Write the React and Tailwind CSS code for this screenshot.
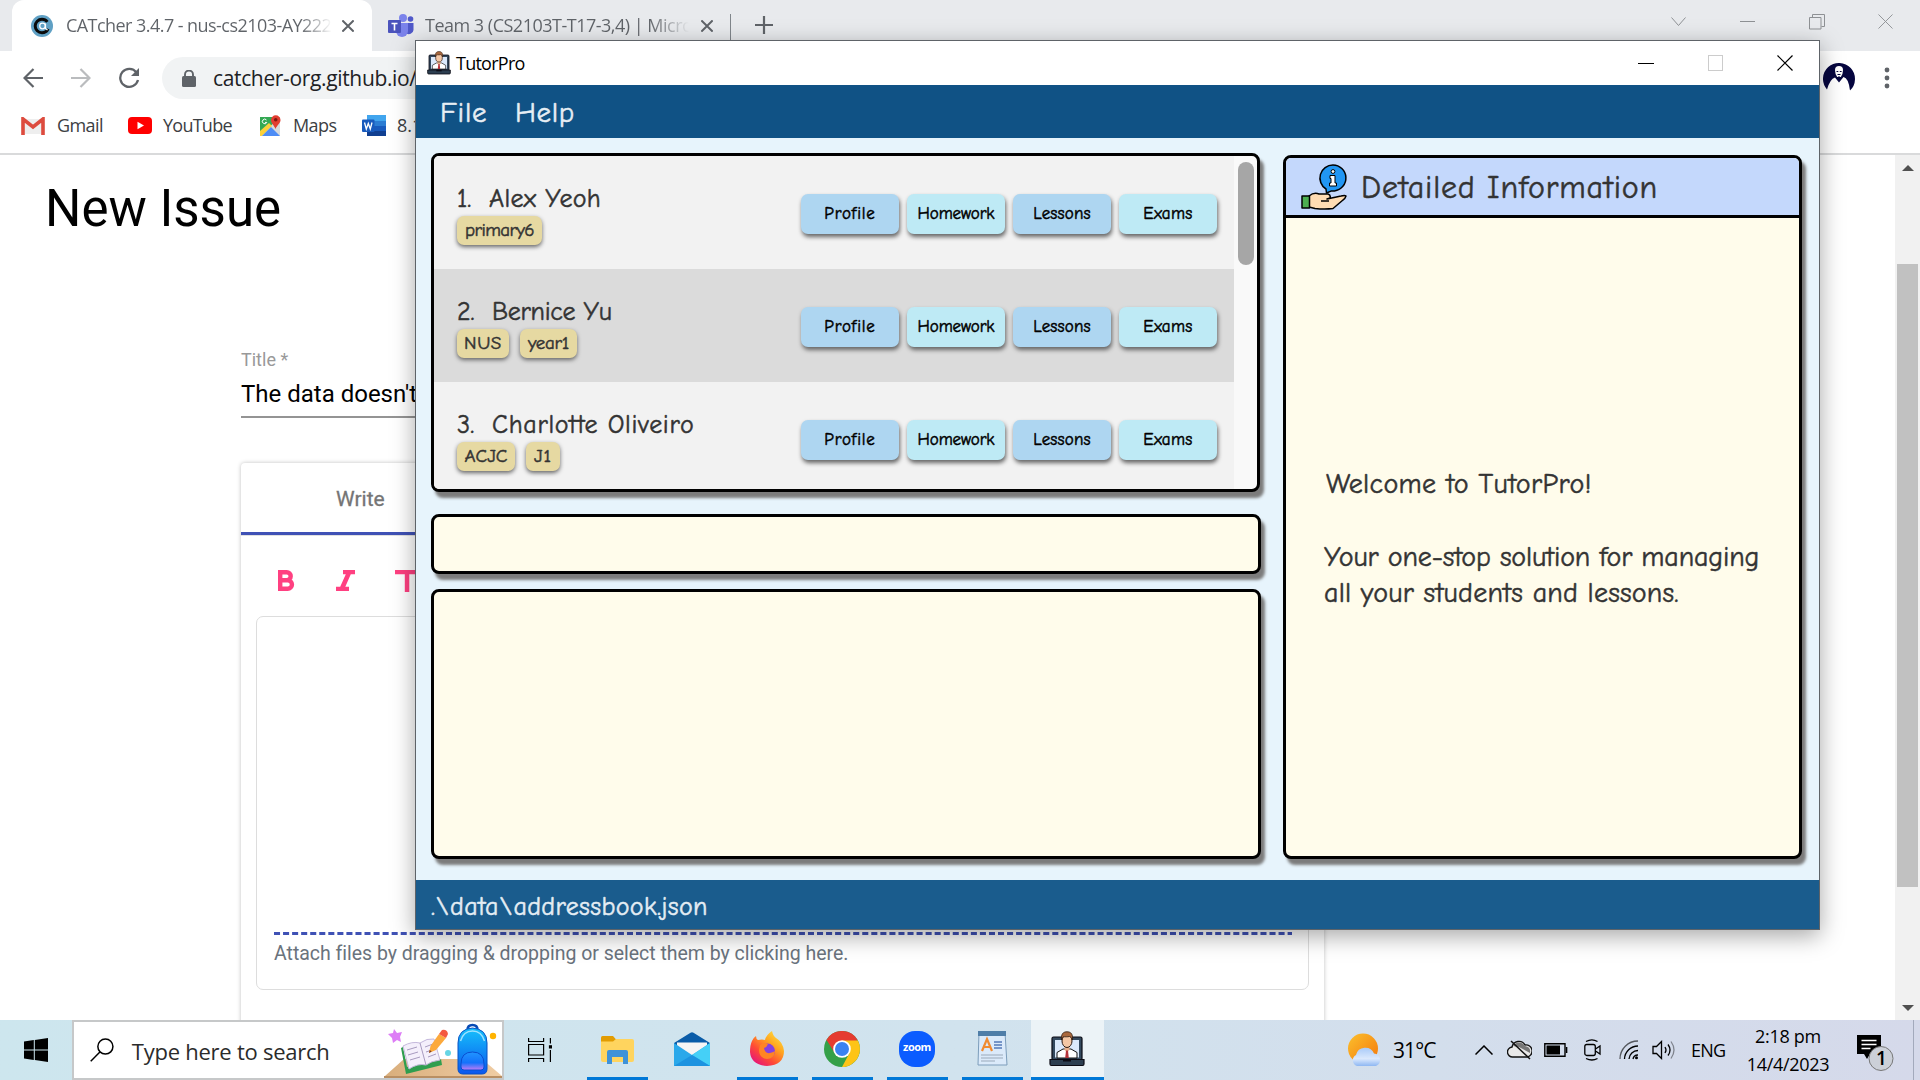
import React from "react";

const TutorIcon = ({ className }) => (
  <svg viewBox="0 0 36 36" className={className}>
    <rect x="3" y="6" width="30" height="23" rx="1.5" fill="#34495e" stroke="#0b0b14" strokeWidth="1.2" />
    <rect x="6" y="9" width="24" height="17.5" fill="#dbe9fb" />
    <path d="M8 27v-5.500l6-3.500h8l6 3.500V27z" fill="#fff" stroke="#111" strokeWidth="1" />
    <path d="M15.500 14h5v5l-2.500 2-2.500-2z" fill="#e8b08c" />
    <ellipse cx="18" cy="10" rx="5" ry="6.500" fill="#f4c7a5" stroke="#2a1a12" strokeWidth="1" />
    <path d="M12.500 9C12 3 14 .8 18 .8S24 3 23.500 9c-1-2-1.500-3-3-3.500-2 .5-5 .3-6 .2-1 .8-1.600 2-2 3.300z" fill="#a9683d" stroke="#2a1a12" strokeWidth=".8" />
    <path d="M17 19.500h2l.8 7.500h-3.600z" fill="#b5333b" />
    <path d="M1 28.500h34v4.500q0 1.500-1.500 1.500h-31Q1 34.500 1 33z" fill="#2c3e50" stroke="#0b0b14" strokeWidth="1.200" />
    <rect x="14" y="28.500" width="8" height="2" fill="#0b0b14" />
  </svg>
);

const X = ({ className, sw = 1 }) => (
  <svg viewBox="0 0 16 16" className={className} fill="none" stroke="currentColor" strokeWidth={sw}>
    <path d="M.5.5l15 15M15.500.5l-15 15" />
  </svg>
);

function TabStrip() {
  return (
    <div className="flex h-[51px] bg-[#e8eaed] pl-3 text-[18px] text-[#5f6368]">
      <div className="flex w-[360px] items-center rounded-t-[12px] bg-white pl-[19px]">
        <svg viewBox="0 0 22 22" className="h-[22px] w-[22px] shrink-0">
          <circle cx="11" cy="11" r="11" fill="#5fa0c4" />
          <circle cx="11" cy="11" r="6.800" fill="none" stroke="#0a0a0a" strokeWidth="3" strokeDasharray="35 8" strokeDashoffset="-3" />
          <circle cx="11.500" cy="11" r="2.800" fill="none" stroke="#fff" strokeWidth="1.300" />
          <path d="M14.500 8.500v5l2 1.500" fill="none" stroke="#fff" strokeWidth="1.200" />
        </svg>
        <div className="ml-[13px] w-[266px] overflow-hidden whitespace-nowrap bg-gradient-to-r from-[#5f6368] from-88% to-transparent bg-clip-text tracking-[-0.55px] text-transparent">CATcher 3.4.7 - nus-cs2103-AY222</div>
        <X className="ml-[10px] h-[12px] w-[12px] shrink-0" sw={2.6} />
      </div>
      <div className="flex w-[358px] items-center border-r-0 pl-[16px]">
        <svg viewBox="0 0 26 24" className="h-[24px] w-[26px] shrink-0">
          <circle cx="15" cy="4" r="4" fill="#7b83eb" />
          <circle cx="22.500" cy="5" r="2.800" fill="#5059c9" />
          <path d="M18 9h7.500v7a4.500 4.500 0 0 1-7.500 3z" fill="#5059c9" />
          <path d="M8 9h12v8a6 6 0 0 1-12 0z" fill="#7b83eb" />
          <rect y="6" width="13" height="13" rx="1" fill="#4b53bc" />
          <path d="M3.500 9.500h6M6.500 9.500v7" stroke="#fff" strokeWidth="1.600" />
        </svg>
        <div className="ml-[11px] w-[264px] overflow-hidden whitespace-nowrap bg-gradient-to-r from-[#5f6368] from-85% to-transparent bg-clip-text tracking-[-0.5px] text-transparent">Team 3 (CS2103T-T17-3,4) | Micro</div>
        <X className="ml-[12px] h-[12px] w-[12px] shrink-0" sw={2.6} />
      </div>
      <div className="mt-[14px] h-[27px] w-px bg-[#80868b]" />
      <svg viewBox="0 0 18 18" className="ml-[24px] mt-[16px] h-[18px] w-[18px]" stroke="#5f6368" strokeWidth="2.200"><path d="M9 0v18M0 9h18" /></svg>
      <div className="ml-auto flex items-start gap-[53px] pr-[27px] pt-[14px] text-[#8e9194]">
        <svg viewBox="0 0 16 16" className="h-4 w-4" fill="none" stroke="currentColor"><path d="M.5 3.500l7 8 7-8" /></svg>
        <svg viewBox="0 0 16 16" className="h-4 w-4" fill="none" stroke="currentColor"><path d="M0 7.500h15" /></svg>
        <svg viewBox="0 0 16 16" className="h-4 w-4" fill="none" stroke="currentColor"><path d="M.5 3.500h11.500v11.500H.5zM3.500 3.500v-3h12v12h-3" /></svg>
        <X className="h-[15px] w-[15px]" />
      </div>
    </div>
  );
}

function Toolbar() {
  return (
    <div className="flex h-[54px] items-center bg-white">
      <svg viewBox="0 0 20 20" className="ml-[23px] h-[20px] w-[20px]" fill="none" stroke="#5f6368" strokeWidth="2.200"><path d="M20 10H2M10.500 1L1.500 10l9 9" /></svg>
      <svg viewBox="0 0 20 20" className="ml-[28px] h-[20px] w-[20px]" fill="none" stroke="#babcbe" strokeWidth="2.200"><path d="M0 10h18M9.500 1l9 9-9 9" /></svg>
      <svg viewBox="0 0 22 22" className="ml-[27px] h-[22px] w-[22px]" fill="none" stroke="#5f6368" strokeWidth="2.300"><path d="M18.500 5.500A9 9 0 1 0 20 13" /><path d="M21 1v8h-8z" fill="#5f6368" stroke="none" /></svg>
      <div className="ml-[22px] flex h-[42px] w-[600px] items-center rounded-full bg-[#f1f3f4] pl-[20px]">
        <svg viewBox="0 0 14 17" className="h-[17px] w-[14px]"><rect y="6" width="14" height="11" rx="1.500" fill="#5f6368" /><path d="M3 7V4.500a4 4 0 0 1 8 0V7" fill="none" stroke="#5f6368" strokeWidth="1.900" /></svg>
        <span className="ml-[17px] pt-[2px] text-[21px] tracking-[-0.35px] text-[#202124]">catcher-org.github.io/</span>
      </div>
      <svg viewBox="0 0 32 32" className="ml-auto h-[32px] w-[32px]">
        <path d="M4 27.500A16 16 0 1 1 27 28.500Q25.500 16 20.500 15L16 20.500 12 15.500Q7 17 4 27.500z" fill="#06063f" />
        <path d="M12 8q0-4 4-4t4 4q0 4.500-2.200 7h-3.600Q12 12.500 12 8z" fill="#fff" />
        <path d="M13.500 9.500h1.800M16.800 9.500h1.800M14.500 12.500h3M16 14v5" stroke="#06063f" />
      </svg>
      <svg viewBox="0 0 6 22" className="ml-[29px] mr-[30px] h-[22px] w-[6px]" fill="#5f6368"><circle cx="3" cy="3" r="2.400" /><circle cx="3" cy="11" r="2.400" /><circle cx="3" cy="19" r="2.400" /></svg>
    </div>
  );
}

function Bookmarks() {
  return (
    <div className="flex h-[50px] items-center border-b-2 border-[#d9dadb] bg-white pb-[8px] pt-px text-[18px] text-[#3c4043]">
      <svg viewBox="0 0 24 18" className="ml-[21px] h-[18px] w-[24px]"><path d="M2 2h20v15H2z" fill="#eee" /><path d="M2 18V2l10 8 10-8v16" fill="none" stroke="#dd4b3e" strokeWidth="3.600" /></svg>
      <span className="ml-[12px] w-[71px] tracking-[-0.6px]">Gmail</span>
      <svg viewBox="0 0 24 17" className="h-[17px] w-[24px]"><rect width="24" height="17" rx="4" fill="#f00" /><path d="M9.500 4.800v7.400l6.500-3.700z" fill="#fff" /></svg>
      <span className="ml-[11px] w-[96px] tracking-[-0.75px]">YouTube</span>
      <svg viewBox="0 0 22 22" className="h-[22px] w-[22px]">
        <path d="M1 2h20v19H1z" fill="#34a853" /><path d="M1 21L21 2v19z" fill="#d7dadd" /><path d="M1 16L10 8l3 3L3 21H1z" fill="#fbd13a" /><path d="M3 21l9-9 9 9z" fill="#4d8cf5" />
        <path d="M16.500 14C15 10 12 8.500 12 5a4.500 4.500 0 0 1 9.500 0c0 3.500-3.500 5-5 9z" fill="#e23d30" /><circle cx="16.700" cy="4.800" r="1.800" fill="#7b1710" />
        <path d="M7.500 5a2.300 2.300 0 1 0 .3 2.400H6" stroke="#fff" fill="none" />
      </svg>
      <span className="ml-[12px] w-[69px] tracking-[-0.6px]">Maps</span>
      <svg viewBox="0 0 24 21" className="h-[21px] w-[24px]"><path d="M5 0h19v21H5z" fill="#185abd" /><path d="M5 0h19v6H5z" fill="#41a5ee" /><path d="M5 6h19v5H5z" fill="#2b7cd3" /><path d="M5 16h19v5H5z" fill="#103f91" /><rect y="4.500" width="12.500" height="12.500" rx="1" fill="#185abd" /><path d="M2.500 7.500l1.800 6.500 2-5.500 2 5.500 1.700-6.500" fill="none" stroke="#fff" strokeWidth="1.300" /></svg>
      <span className="ml-[11px]">8.1</span>
    </div>
  );
}

function IssuePage() {
  return (
    <div className="flex h-[865px] bg-white font-['Roboto',sans-serif]">
      <div className="flex-1 overflow-hidden">
        <h1 className="ml-[45px] mt-[24px] h-[60px] text-[51px] leading-[60px] text-black">New Issue</h1>
        <div className="ml-[241px] mt-[110px] w-[1083px]">
          <div className="h-[22px] text-[18px] leading-[22px] text-[#999]">Title *</div>
          <div className="mt-[9px] h-[38px] border-b-2 border-[#949494] text-[24px] leading-[28px] text-black">The data doesn&apos;t</div>
          <div className="mt-[45px] h-[600px] rounded-[4px] bg-white shadow-[0_0_4px_rgba(0,0,0,0.25)]">
            <div className="h-[72px] border-b-3 border-[#3f51b5] pl-[95px] pt-[23px] text-[21px] leading-[26px] text-[#757575] [-webkit-text-stroke:0.3px]">Write</div>
            <div className="flex h-[81px] border-t border-[#e0e0e0] pl-[37px] pt-[34px] text-[#ff4081]">
              <svg viewBox="0 0 17 21" className="h-[21px] w-[17px]" fill="none" stroke="currentColor" strokeWidth="4.400"><path d="M2.200 2.200h6.500a4 4 0 0 1 0 8H2.200zM2.200 10.300h7.500a4.100 4.100 0 0 1 0 8.500H2.200z" /></svg>
              <svg viewBox="0 0 19 21" className="ml-[41px] h-[21px] w-[19px]" fill="currentColor"><path d="M7 0h12v4.200h-4.200L9.300 16.800H13V21H0v-4.200h4.200L9.800 4.200H7z" /></svg>
              <svg viewBox="0 0 24 22" className="ml-[40px] h-[22px] w-[24px]" fill="currentColor"><path d="M0 0h24v4.200h-9.700V22h-4.500V4.200H0z" /></svg>
            </div>
            <div className="mx-[15px] h-[374px] rounded-[7px] border border-[#ddd] px-[17px] pt-[315px]">
              <svg viewBox="0 0 1018 3" className="h-[3px] w-[1018px]"><path d="M0 1.500h1018" stroke="#3f51b5" strokeWidth="3" strokeDasharray="6.050 3" /></svg>
              <div className="mt-[7px] text-[19.5px] leading-[24px] tracking-[-0.02px] text-[#6a737d]">Attach files by dragging &amp; dropping or select them by clicking here.</div>
            </div>
          </div>
        </div>
      </div>
      <div className="flex w-[25px] flex-col items-center bg-[#f1f1f1]">
        <svg viewBox="0 0 12 6" className="mt-[10px] h-[6px] w-[12px]" fill="#505050"><path d="M6 0l6 6H0z" /></svg>
        <div className="mt-[93px] h-[623px] w-[21px] bg-[#c1c1c1]" />
        <svg viewBox="0 0 12 6" className="mt-[118px] h-[6px] w-[12px]" fill="#505050"><path d="M0 0h12L6 6z" /></svg>
      </div>
    </div>
  );
}

const students = [
  { n: "1.", gap: "w-[32px]", name: "Alex Yeoh", nameCls: "tracking-[0.3px]", tags: [["primary6", "w-[85px] tracking-[-0.6px]"]] },
  { n: "2.", gap: "w-[35px]", name: "Bernice Yu", nameCls: "tracking-[-0.3px]", tags: [["NUS", "w-[52px] tracking-[0.6px]"], ["year1", "w-[57px] tracking-[-0.3px]"]] },
  { n: "3.", gap: "w-[35px]", name: "Charlotte Oliveiro", nameCls: "tracking-[0.7px]", tags: [["ACJC", "w-[58px] tracking-[0px]"], ["J1", "w-[34px] tracking-[0.8px]"]] },
];

const actions = [
  ["Profile", "bg-[#aed6f1] tracking-[0.8px]"],
  ["Homework", "bg-[#beeaf5] tracking-[-0.1px]"],
  ["Lessons", "bg-[#aed6f1] tracking-[0.15px]"],
  ["Exams", "bg-[#beeaf5] tracking-[0.3px]"],
];

const panel = "border-3 border-black rounded-[8px] shadow-[4px_6px_3px_#7c7c7c]";
const comic = "font-['Comic_Sans_MS','Comic_Neue','Noto_Sans',sans-serif] [-webkit-text-stroke:0.5px]";

function TutorWindow() {
  return (
    <div className="absolute left-[415px] top-[40px] flex h-[890px] w-[1405px] flex-col border border-[#5e6368] bg-[#e7f4fc] shadow-[0_6px_22px_rgba(0,0,0,0.35)]">
      <div className="flex h-[44px] shrink-0 items-center bg-white pl-[11px] text-[18px] text-black">
        <TutorIcon className="h-[26px] w-[24px]" />
        <span className="ml-[5px] tracking-[-0.75px]">TutorPro</span>
        <div className="ml-auto flex items-center gap-[54px] pr-[26px]">
          <div className="h-px w-[16px] bg-black" />
          <div className="h-[16px] w-[15px] border border-[#ccc]" />
          <X className="h-[16px] w-[16px]" sw={1.2} />
        </div>
      </div>
      <div className={`flex h-[53px] shrink-0 items-center bg-[#105285] pl-[24px] pt-[2px] text-[29px] text-[#e7eef4] ${comic}`}>
        <span className="w-[75px] tracking-[0.8px]">File</span>
        <span className="tracking-[0.6px]">Help</span>
      </div>
      <div className={`flex h-[742px] shrink-0 pl-[15px] text-[#333] ${comic}`}>
        <div className="flex w-[830px] flex-col pt-[15px]">
          <div className={`${panel} flex h-[339px] w-[829px] overflow-hidden bg-[#f9f9f9]`}>
            <div className="w-[800px] shrink-0">
              {students.map((s, i) => (
                <div key={s.n} className={`flex h-[113px] pl-[23px] ${i === 1 ? "bg-[#dbdbdb]" : "bg-[#f2f2f2]"}`}>
                  <div className="w-[344px] pt-[27px]">
                    <div className="flex h-[33px] whitespace-pre text-[26px] leading-[32px]">
                      <span className={s.gap}>{s.n}</span>
                      <span className={s.nameCls}>{s.name}</span>
                    </div>
                    <div className="flex gap-[11px]">
                      {s.tags.map(([t, c]) => (
                        <span key={t} className={`${c} flex h-[29px] items-center justify-center rounded-[7px] bg-[#e6d9a2] text-[19px] shadow-[0_2px_4px_#666]`}>{t}</span>
                      ))}
                    </div>
                  </div>
                  <div className="flex gap-2 pt-[38px]">
                    {actions.map(([t, c]) => (
                      <div key={t} className={`${c} flex h-[40px] w-[98px] items-center justify-center rounded-[7px] pb-px text-[17px] text-black shadow-[1px_3px_4px_#666]`}>{t}</div>
                    ))}
                  </div>
                </div>
              ))}
            </div>
            <div className="ml-[4px] mt-[6px] h-[103px] w-[16px] rounded-full bg-[#a6a6a6]" />
          </div>
          <div className={`${panel} mt-[22px] h-[60px] bg-[#fffceb]`} />
          <div className={`${panel} mt-[15px] h-[270px] bg-[#fffceb]`} />
        </div>
        <div className={`${panel} ml-[22px] mt-[17px] h-[704px] w-[519px] bg-[#fffceb]`}>
          <div className="flex h-[60px] items-center rounded-t-[5px] border-b-3 border-black bg-[#c4d8fc] pl-[15px]">
            <svg viewBox="0 0 46 46" className="h-[46px] w-[46px]" stroke="#000" strokeWidth="1.500" strokeLinejoin="round">
              <path d="M32 1a13 13 0 0 1 1.500 25.900h-3L25.500 29l-.5-4A13 13 0 0 1 32 1z" fill="#2196f3" />
              <circle cx="32" cy="7.500" r="1.900" fill="#fff" strokeWidth="1" />
              <path d="M29 11.500h5V19h1.500v3h-7v-3H30v-4.500h-1z" fill="#fff" strokeWidth="1" />
              <path d="M8 32q5-4 10-2h9q3 1 2 4l-3 1 14-3q4-1 5 0-1 3-3 4l-10 8.500q-8 1-18 0L8 43z" fill="#ffdcb3" />
              <path d="M20 37h8" fill="none" />
              <rect x="1" y="32" width="7.500" height="12" fill="#4caf50" />
            </svg>
            <span className="ml-[14px] pt-[3px] text-[32px] tracking-[0.8px]">Detailed Information</span>
          </div>
          <div className="pl-[38px] pt-[248px] text-[28px] leading-[36px] whitespace-nowrap">
            <p className="pl-[2px] tracking-[0.35px]">Welcome to TutorPro!</p>
            <p className="mt-[37px] tracking-[-0.15px]">Your one-stop solution for managing</p>
            <p className="tracking-[0.2px]">all your students and lessons.</p>
          </div>
        </div>
      </div>
      <div className={`flex flex-1 items-center bg-[#1a5c8d] pl-[15px] pt-[5px] text-[26px] tracking-[0.37px] text-[#e4edf4] ${comic}`}>.\data\addressbook.json</div>
    </div>
  );
}

function TaskItem({ children, line = true, active }) {
  return (
    <div className={`flex h-[60px] flex-col items-center ${active ? "w-[73px] bg-[#ecf3f7]" : "w-[61px]"}`}>
      <div className="flex h-[57px] items-center justify-center pr-px">{children}</div>
      {line && <div className="h-[3px] w-full bg-[#0078d7]" />}
    </div>
  );
}

function Taskbar() {
  return (
    <div className="flex h-[60px] items-center bg-gradient-to-r from-[#cde6ee] via-[#d1e3ee] to-[#d5d9ea] text-black">
      <svg viewBox="0 0 24 24" className="ml-[24px] h-[24px] w-[24px]"><path d="M0 3.400l9.800-1.400v9.500H0zM10.800 1.900L24 0v11.500H10.800zM0 12.500h9.800V22L0 20.600zM10.800 12.500H24V24l-13.200-1.900z" /></svg>
      <div className="ml-[24px] flex h-[60px] w-[432px] items-center overflow-hidden border-2 border-[#c6c8c9] bg-white pl-[16px]">
        <svg viewBox="0 0 24 24" className="h-[24px] w-[24px]" fill="none" stroke="#000" strokeWidth="1.500"><circle cx="15.500" cy="8.500" r="7.600" /><path d="M10 14L.7 23.400" /></svg>
        <span className="ml-[18px] w-[254px] pt-[2px] text-[22px] leading-[28px] tracking-[-0.25px] text-[#2b2b2b]">Type here to search</span>
        <svg viewBox="0 0 118 56" className="h-[56px] w-[118px] shrink-0">
          <defs>
            <linearGradient id="bag" x2="0" y2="1"><stop stopColor="#16c1fb" /><stop offset="1" stopColor="#0a56ef" /></linearGradient>
            <linearGradient id="pocket" x2="0" y2="1"><stop stopColor="#2196ff" /><stop offset=".6" stopColor="#1472fb" /><stop offset="1" stopColor="#c27cf7" /></linearGradient>
            <linearGradient id="desk"><stop stopColor="#d9ae7c" /><stop offset="1" stopColor="#f0cda4" /></linearGradient>
          </defs>
          <path d="M20 37h78l20 17H1z" fill="url(#desk)" /><path d="M0 54h118v2H0z" fill="#b98f63" />
          <path d="M10 7l3 4 5-1-2 5 1 5-4-2-4 3-1-5-4-4 5-1z" fill="#dd7df6" />
          <path d="M17 26l5 26 36-9-1-6-34 8-4-20z" fill="#2f9e4f" />
          <path d="M19 24q9-5 17-3 7-5 14-4l6 21q-9 1-14 5-8-2-17 4z" fill="#f4effb" stroke="#c5b9dc" />
          <path d="M36 21l6 22M23 28l10-3M24 33l10-3M26 38l10-3M41 25l8-3M42 30l6-2M44 35l8-3" fill="none" stroke="#a89bc0" />
          <path d="M45 31l1.500-7L55 12l7 4-10 12z" fill="#fca93c" /><path d="M55 12l3-4q5-1 6 4l-2 4z" fill="#f4593f" /><path d="M45 31l.7-3 2 1.500z" fill="#7d3b24" />
          <circle cx="64" cy="31" r="3" fill="#66d5e4" /><circle cx="109" cy="14" r="3.200" fill="#ffb300" />
          <path d="M83.500 8q0-5 5-5t5 5" fill="none" stroke="#084bb5" strokeWidth="2.500" />
          <path d="M74 21q0-14 14.500-15 14.500 1 14.500 15v26q0 5-5 5H79q-5 0-5-5z" fill="url(#bag)" stroke="#0953c5" />
          <path d="M76.500 19q3-10 12-10t12 10" fill="none" stroke="#9fe2ff" strokeWidth="1.500" />
          <path d="M77 42q0-12 11.500-12T100 42v3q0 3-3 3H80q-3 0-3-3z" fill="url(#pocket)" stroke="#0a4ed0" />
        </svg>
      </div>
      <svg viewBox="0 0 24 24" className="ml-[24px] h-[24px] w-[24px]" fill="none" stroke="#000" strokeWidth="1.200"><path d="M.6 0v3.500h15V0M.6 24v-3.500h15V24M.6 6.500h15v10.500H.6zM22.400 0v5.500M22.400 12v12" /><path d="M21.500 7.800h2v2h-2z" fill="#000" /></svg>
      <div className="ml-[35px] flex gap-[14px]">
        <TaskItem>
          <svg viewBox="0 0 33 28" className="mt-[3px] h-[28px] w-[33px]"><path d="M0 1.500Q0 0 1.500 0H12l3.500 4L13 8H0z" fill="#e29c02" /><path d="M0 5.500h12L15 3h16q2 0 2 2v19q0 2-2 2H2q-2 0-2-2z" fill="#ffd45e" /><path d="M6 16q0-2 2-2h17q2 0 2 2v12h-5v-7H11v7H6z" fill="#3f92d8" /></svg>
        </TaskItem>
        <TaskItem line={false}>
          <svg viewBox="0 0 36 34" className="h-[34px] w-[36px]"><path d="M0 11L16.500.8q1.500-1 3 0L36 11v6H0z" fill="#0a5ca8" /><path d="M3 10.500h30V20L18 26 3 20z" fill="#f5f5f5" /><path d="M0 11l18 12L36 11v23H0z" fill="#2aa8ea" /><path d="M36 11v23L18 23z" fill="#45d0f7" /><path d="M0 34l18-11 18 11z" fill="#1c93e0" /></svg>
        </TaskItem>
        <TaskItem>
          <svg viewBox="0 0 36 36" className="h-[36px] w-[36px]">
            <defs><linearGradient id="fox" x1="1" x2=".2" y2="1"><stop stopColor="#fff04a" /><stop offset=".4" stopColor="#ffa51f" /><stop offset=".7" stopColor="#ff4a35" /><stop offset="1" stopColor="#e3127f" /></linearGradient></defs>
            <path d="M3 10q1-3 4-5 0 3 2 4 4-1 7 0 1-5 7-9 1 5 4 7 7 4 8 13 0 14-17 15Q2 34 1 21q0-7 2-11z" fill="url(#fox)" />
            <circle cx="18.500" cy="20" r="7.500" fill="#8542de" /><path d="M11 14q4-3 8-1-1 3-4 4 1 6 6 5 4-1 5-2-1 8-8 8-8-1-8-9z" fill="#ff8424" />
          </svg>
        </TaskItem>
        <TaskItem>
          <svg viewBox="0 0 36 36" className="h-[36px] w-[36px]"><circle cx="18" cy="18" r="18" fill="#34a048" /><path d="M18 18L2.400 9A18 18 0 0 1 33.600 9z" fill="#e53b30" /><path d="M18 9.500h15.800A18 18 0 0 1 18 36l7.500-14z" fill="#fdc416" /><path d="M2.400 9l8 13L18 9.500z" fill="#e53b30" /><path d="M2.400 9l8.300 13.300A18 18 0 0 1 2.400 9z" fill="#34a048" /><circle cx="18" cy="18" r="8.800" fill="#fff" /><circle cx="18" cy="18" r="7" fill="#3b82f0" /></svg>
        </TaskItem>
        <TaskItem><div className="flex h-[36px] w-[36px] items-center justify-center rounded-[16px] bg-[#0b5cff] pb-[2px] text-[11px] font-bold tracking-[-0.5px] text-white">zoom</div></TaskItem>
        <TaskItem>
          <svg viewBox="0 0 31 35" className="h-[35px] w-[31px]"><path d="M2 1h26l2 33H1z" fill="#dbeafa" stroke="#7c9dbb" /><path d="M1 0h28v5H1z" fill="#4f7ea8" /><path d="M5 20l5-12 5 12M7 16h6" stroke="#f08b32" strokeWidth="2.200" fill="none" /><path d="M17 11h8M17 14h8M17 17h8" stroke="#5579b8" strokeWidth="1.500" /><path d="M4 24h22M4 27h22M4 30h14" stroke="#9aa9ba" /></svg>
        </TaskItem>
      </div>
      <div className="ml-[8px]"><TaskItem active><TutorIcon className="h-[36px] w-[36px]" /></TaskItem></div>
      <svg viewBox="0 0 34 34" className="ml-[244px] h-[34px] w-[34px]"><defs><linearGradient id="sun" x2="1" y2="1"><stop stopColor="#fbc02d" /><stop offset="1" stopColor="#f4770c" /></linearGradient><linearGradient id="cl" x2="0" y2="1"><stop stopColor="#a9caf8" /><stop offset=".6" stopColor="#dbe9fd" /><stop offset="1" stopColor="#8eb7f2" /></linearGradient></defs><circle cx="15" cy="15.500" r="15" fill="url(#sun)" /><path d="M9 33a6 6 0 0 1-1-11 9.500 9.500 0 0 1 18-1.500A6.500 6.500 0 0 1 28 33z" fill="url(#cl)" /></svg>
      <span className="ml-[11px] w-[82px] pt-[2px] text-[21px] tracking-[-0.9px]">31°C</span>
      <svg viewBox="0 0 18 10" className="h-[10px] w-[18px]" fill="none" stroke="#000" strokeWidth="1.500"><path d="M.5 9.500L9 1l8.500 8.500" /></svg>
      <svg viewBox="0 0 25 20" className="ml-[14px] h-[20px] w-[25px]"><path d="M6 17a5 5 0 0 1-1-10 7 7 0 0 1 13-2 6 6 0 0 1 2 12z" fill="#e9e9e9" stroke="#111" strokeWidth="1.400" /><path d="M6 6a7 7 0 0 1 12 0q6 1 5 7L12 7z" fill="#777" /><path d="M4 1l19 18" stroke="#111" strokeWidth="1.500" /></svg>
      <svg viewBox="0 0 24 14" className="ml-[12px] h-[14px] w-[24px]"><path d="M.8.8H21v12.400H.8z" fill="none" stroke="#000" strokeWidth="1.400" /><path d="M2.500 2.500H16v9H2.500z" /><path d="M22.600 4v6" stroke="#000" strokeWidth="1.500" /></svg>
      <svg viewBox="0 0 17 22" className="ml-[16px] h-[22px] w-[17px]" fill="none" stroke="#000" strokeWidth="1.300"><rect x=".8" y="5.500" width="10.500" height="11" rx="2" /><path d="M11.500 10l4.500-3v8l-4.500-3M2 2.500Q8 -.8 13.500 2.500M2 19.500q6 3 11.500 0" /></svg>
      <svg viewBox="0 0 20 20" className="ml-[18px] h-[20px] w-[20px]" fill="none" stroke="#000" strokeWidth="1.300"><path d="M1 19A18 18 0 0 1 19 1" opacity=".6" /><path d="M5.500 19A13.500 13.500 0 0 1 19 6M10 19a9 9 0 0 1 9-8.500M14 19a5 5 0 0 1 5-4" /><circle cx="17.500" cy="17.700" r="1.500" fill="#000" stroke="none" /></svg>
      <svg viewBox="0 0 24 20" className="ml-[13px] h-[20px] w-[24px]" fill="none" stroke="#000" strokeWidth="1.300"><path d="M1 6.500h3.500l5-5v17l-5-5H1z" /><path d="M13 7q2 3 0 6M16 4.500q4 5.500 0 11" /><path d="M19 1.500q6 8.500 0 17" opacity=".4" /></svg>
      <span className="ml-[15px] w-[55px] pt-px text-[18px] tracking-[-0.8px]">ENG</span>
      <div className="flex w-[84px] flex-col items-center text-[18px] leading-[28px] tracking-[-0.3px]"><span>2:18 pm</span><span>14/4/2023</span></div>
      <svg viewBox="0 0 37 38" className="ml-[27px] mt-[3px] h-[38px] w-[37px]"><path d="M0 2h24v19H13l-3 5-3-5H0z" /><path d="M4.500 7.500h15M4.500 11.500h15M4.500 15.500h9" stroke="#fff" strokeWidth="1.300" /><circle cx="24" cy="25.500" r="12" fill="#ccd0d8" stroke="#777" /><text x="19" y="32" fontSize="19" className="font-['Open_Sans',sans-serif] font-semibold">1</text></svg>
      <div className="ml-auto mr-[6px] h-[60px] w-px bg-[#a3aabc]" />
    </div>
  );
}

export default function App() {
  return (
    <div className="relative h-[1080px] w-[1920px] overflow-hidden bg-white font-['Segoe_UI','Open_Sans',sans-serif]">
      <TabStrip />
      <Toolbar />
      <Bookmarks />
      <IssuePage />
      <Taskbar />
      <TutorWindow />
    </div>
  );
}
